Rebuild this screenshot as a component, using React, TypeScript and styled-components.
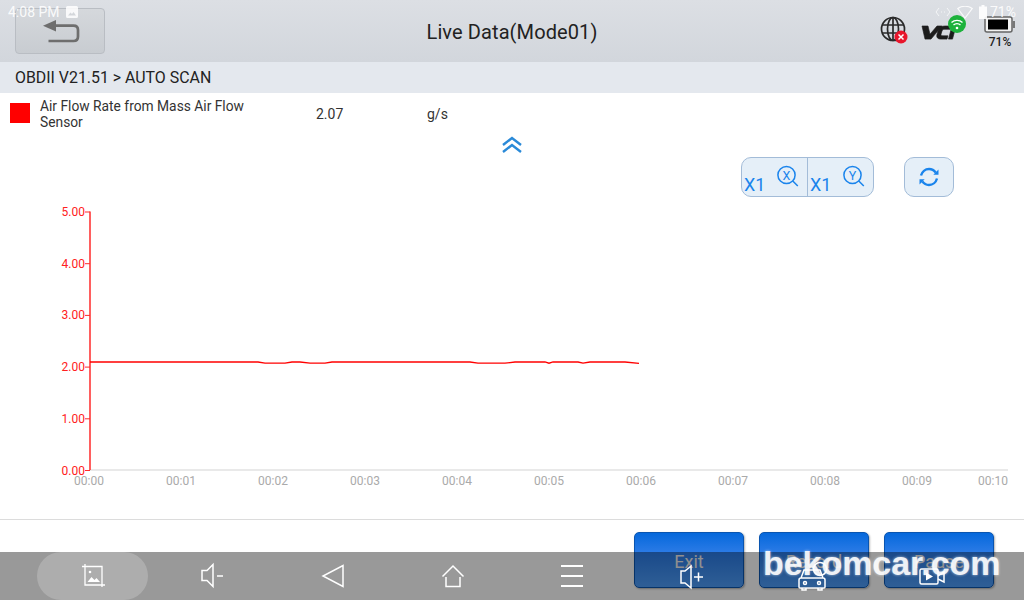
import React from "react";
import styled, { createGlobalStyle } from "styled-components";

const Global = createGlobalStyle`
  html, body { margin: 0; padding: 0; background: #fff; }
  body { font-family: Roboto, "Liberation Sans", sans-serif; }
`;

const Screen = styled.div`
  position: relative;
  width: 1024px;
  height: 600px;
  overflow: hidden;
  display: flex;
  flex-direction: column;
  background: #fff;
  color: #222;
`;

const Header = styled.header`
  height: 62px;
  flex: none;
  display: grid;
  grid-template-columns: 1fr auto 1fr;
  align-items: center;
  padding: 0 8px 0 15px;
  box-sizing: border-box;
  background: linear-gradient(#dcdfe4, #d2d6dc);
`;

const BackButton = styled.button`
  width: 90px;
  height: 46px;
  margin-top: -1px;
  padding: 0;
  display: flex;
  align-items: center;
  justify-content: center;
  border: 1px solid #b9bdc3;
  border-radius: 4px;
  background: linear-gradient(#d5d8dc, #c8ccd1);
`;

const Title = styled.h1`
  margin: 2px 0 0;
  transform: translateX(-3.5px);
  text-align: center;
  font-size: 20px;
  letter-spacing: 0.1px;
  font-weight: 400;
  color: #222;
`;

const StatusIcons = styled.div`
  justify-self: end;
  display: flex;
  align-items: flex-start;
  height: 62px;
`;

const GlobeIcon = styled.svg`
  margin-top: 16px;
`;

const VciLogo = styled.svg`
  margin: 10px 0 0 11px;
`;

const BatteryBox = styled.div`
  display: flex;
  flex-direction: column;
  align-items: center;
  gap: 2px;
  margin: 16px 0 0 17px;
  font-size: 12px;
  font-weight: 500;
  color: #222;
  line-height: 14px;
`;

const Breadcrumb = styled.div`
  height: 31px;
  flex: none;
  display: flex;
  align-items: center;
  padding-left: 15px;
  background: #e4e8ee;
  font-size: 15.9px;
  color: #222;
`;

const DataRow = styled.div`
  height: 40px;
  flex: none;
  display: flex;
  align-items: center;
  box-sizing: border-box;
  font-size: 13.8px;
  color: #333;
`;

const Swatch = styled.span`
  width: 20px;
  height: 20px;
  margin-left: 10px;
  background: #ff0000;
  flex: none;
`;

const SensorName = styled.span`
  width: 226px;
  margin: 1px 0 0 10px;
  line-height: 16px;
  flex: none;
`;

const Value = styled.span`
  width: 50px;
  margin: 2px 0 0 50px;
  font-size: 14px;
  flex: none;
`;

const Unit = styled.span`
  margin: 2px 0 0 61px;
  font-size: 14px;
`;

const Expand = styled.div`
  height: 24px;
  flex: none;
  display: flex;
  justify-content: center;
`;

const ControlRow = styled.div`
  height: 40px;
  flex: none;
  display: flex;
  justify-content: flex-end;
  padding-right: 70px;
  gap: 30px;
`;

const ZoomGroup = styled.div`
  width: 133px;
  height: 40px;
  box-sizing: border-box;
  display: flex;
  border: 1px solid #a3bcd8;
  border-radius: 10px;
  background: #e5eff8;
`;

const ZoomCell = styled.div<{ $divider?: boolean }>`
  flex: 1;
  position: relative;
  display: flex;
  justify-content: space-between;
  align-items: flex-start;
  padding: 7px 7px 0 2px;
  border-left: ${(p) => (p.$divider ? "1px solid #a3bcd8" : "none")};
`;

const ZoomLabel = styled.span`
  align-self: flex-end;
  font-size: 18px;
  line-height: 22px;
  color: #1a84ec;
`;

const RefreshButton = styled.button`
  width: 50px;
  height: 40px;
  padding: 0;
  display: flex;
  align-items: center;
  justify-content: center;
  border: 1px solid #a3bcd8;
  border-radius: 10px;
  background: #e5eff8;
`;

const ChartArea = styled.div`
  flex: 1;
  min-height: 0;
`;

const ChartSvg = styled.svg`
  display: block;
  font-family: Roboto, "Liberation Sans", sans-serif;
  font-size: 12px;
`;

const Footer = styled.footer`
  height: 81px;
  flex: none;
  box-sizing: border-box;
  border-top: 1px solid #dcdcdc;
  padding: 12px 30px 0 0;
  display: flex;
  justify-content: flex-end;
  gap: 15px;
`;

const ActionButton = styled.button`
  width: 110px;
  height: 56px;
  padding: 18px 0 0;
  box-sizing: border-box;
  display: flex;
  justify-content: center;
  align-items: flex-start;
  border: 1px solid #0a55b0;
  border-radius: 5px;
  background: linear-gradient(#0568dc, #2b7be6 36%, #4f9efa);
  box-shadow: 1px 1px 2px rgba(0, 0, 0, 0.3);
  color: #eeeeee;
  font-family: Roboto, "Liberation Sans", sans-serif;
  font-size: 18px;
`;

const SystemStatus = styled.div`
  position: absolute;
  top: 0;
  left: 0;
  right: 0;
  height: 24px;
  display: flex;
  align-items: center;
  justify-content: space-between;
  padding: 0 8px;
  box-sizing: border-box;
  color: rgba(255, 255, 255, 0.9);
  font-size: 14px;
  pointer-events: none;
`;

const StatusGroup = styled.div`
  display: flex;
  align-items: center;
  gap: 6px;
`;

const BatteryPercent = styled.span`
  margin-left: -3px;
`;

const NavBar = styled.nav`
  position: absolute;
  left: 0;
  right: 0;
  bottom: 0;
  height: 48px;
  background: rgba(0, 0, 0, 0.4);
`;

const NavHighlight = styled.div`
  position: absolute;
  left: 37px;
  top: 0;
  width: 111px;
  height: 48px;
  border-radius: 24px;
  background: rgba(255, 255, 255, 0.2);
`;

const NavIcon = styled.svg<{ $x: number }>`
  position: absolute;
  left: ${(p) => p.$x}px;
  top: 0;
`;

const Watermark = styled.div`
  position: absolute;
  left: 763px;
  top: 543px;
  font-family: "Liberation Sans", sans-serif;
  font-size: 34px;
  line-height: 40px;
  font-weight: 700;
  letter-spacing: -0.05px;
  color: #fff;
  opacity: 0.92;
  text-shadow: 0 0 3px rgba(255, 255, 255, 0.7);
  white-space: nowrap;
`;

const linePoints =
  "90,165 258,165 265,166.2 285,166.2 292,165 300,165 310,166.2 325,166.2 332,165 470,165 478,166.2 505,166.2 515,165 545,165 549,166.2 553,165 578,165 583,166.2 590,165 625,165 639,166.4";

const yTicks = ["5.00", "4.00", "3.00", "2.00", "1.00", "0.00"];
const xLabels = [
  ["00:00", 89],
  ["00:01", 181],
  ["00:02", 273],
  ["00:03", 365],
  ["00:04", 457],
  ["00:05", 549],
  ["00:06", 641],
  ["00:07", 733],
  ["00:08", 825],
  ["00:09", 917],
  ["00:10", 993],
] as const;

const ZoomGlass = ({ letter }: { letter: string }) => (
  <svg width="24" height="24" viewBox="0 0 24 24" fill="none" stroke="#1a84ec" strokeWidth="1.5">
    <circle cx="10.5" cy="10" r="8.6" />
    <path d="M16.800 16l5 5" />
    <text x="10.5" y="14.500" textAnchor="middle" fontSize="12.500" fill="#1a84ec" stroke="none" fontFamily="Roboto, sans-serif">
      {letter}
    </text>
  </svg>
);

export default function App() {
  return (
    <Screen>
      <Global />
      <Header>
        <BackButton aria-label="Back">
          <svg width="40" height="26" viewBox="0 0 40 26" fill="none">
            <path d="M3 7.700L16 2v11.500z" fill="#6e6e6e" />
            <path d="M15 7.700H33.500c3 0 4.500 1.800 4.500 4.300v6.500c0 3-1.800 4.500-4.500 4.500H8.500" stroke="#6e6e6e" strokeWidth="2.700" />
          </svg>
        </BackButton>
        <Title>Live Data(Mode01)</Title>
        <StatusIcons>
          <GlobeIcon width="30" height="30" viewBox="0 0 30 30" fill="none">
            <g stroke="#2a2a2a" strokeWidth="1.700">
              <circle cx="13" cy="13" r="11.500" />
              <ellipse cx="13" cy="13" rx="5.500" ry="11.500" />
              <path d="M2 9h22M2 17h22M13 1.500v23" />
            </g>
            <circle cx="21" cy="21" r="6.500" fill="#e8162c" />
            <path d="M18.500 18.500l5 5m0-5l-5 5" stroke="#fff" strokeWidth="1.500" />
          </GlobeIcon>
          <VciLogo width="46" height="40" viewBox="0 0 46 40">
            <g transform="translate(0,16) scale(1,.82) translate(0,-16)" fill="#1c1c1c" stroke="#1c1c1c" strokeWidth="0.7">
              <path d="M1 16h6l2 10 7-10h5l-11 16H4z" />
              <path d="M30 16h-6c-4 0-6 2-7 6l-1 4c-1 4 1 6 4 6h6l1-4h-5c-2 0-2-1-2-2l1-4c.5-2 1.500-2 3-2h5z" />
              <path d="M31 16h4l-3.500 16h-4z" />
            </g>
            <circle cx="36" cy="14" r="9" fill="#1db23c" />
            <g fill="none" stroke="#fff" strokeWidth="1.400">
              <path d="M30.500 12.500c3-2.800 8-2.800 11 0" />
              <path d="M32.500 15c2-1.800 5-1.800 7 0" />
            </g>
            <circle cx="36" cy="18" r="1.300" fill="#fff" />
          </VciLogo>
          <BatteryBox>
            <svg width="32" height="17" viewBox="0 0 32 17" fill="none">
              <rect x="1" y="1" width="27" height="15" rx="2" fill="#f2f2f2" stroke="#666" strokeWidth="1.500" />
              <rect x="4" y="3.500" width="20" height="10" fill="#000" />
              <rect x="28.500" y="5" width="2.500" height="7" fill="#777" />
            </svg>
            71%
          </BatteryBox>
        </StatusIcons>
      </Header>
      <Breadcrumb>OBDII V21.51 &gt; AUTO SCAN</Breadcrumb>
      <DataRow>
        <Swatch />
        <SensorName>Air Flow Rate from Mass Air Flow Sensor</SensorName>
        <Value>2.07</Value>
        <Unit>g/s</Unit>
      </DataRow>
      <Expand>
        <svg width="24" height="24" viewBox="0 0 24 24" fill="none" stroke="#2a8ad8" strokeWidth="2.400">
          <path d="M3 12l9-7 9 7M3 19l9-7 9 7" />
        </svg>
      </Expand>
      <ControlRow>
        <ZoomGroup>
          <ZoomCell>
            <ZoomLabel>X1</ZoomLabel>
            <ZoomGlass letter="X" />
          </ZoomCell>
          <ZoomCell $divider>
            <ZoomLabel>X1</ZoomLabel>
            <ZoomGlass letter="Y" />
          </ZoomCell>
        </ZoomGroup>
        <RefreshButton aria-label="Refresh">
          <svg width="22" height="22" viewBox="0 0 22 22" fill="none" stroke="#1a84ec" strokeWidth="2.400">
            <path d="M3 9.500C4 5.800 7.200 3 11 3c2.800 0 5.200 1.400 6.700 3.600" />
            <path d="M19 12.500C18 16.200 14.800 19 11 19c-2.800 0-5.200-1.400-6.700-3.600" />
            <path d="M20.500 3.500v5.200h-5.200z" fill="#1a84ec" stroke="none" />
            <path d="M1.500 18.500v-5.200h5.200z" fill="#1a84ec" stroke="none" />
          </svg>
        </RefreshButton>
      </ControlRow>
      <ChartArea>
        <ChartSvg width="1024" height="322" viewBox="0 0 1024 322">
          <line x1="90" y1="273" x2="1008" y2="273" stroke="#e2e2e2" strokeWidth="1.500" />
          <line x1="90" y1="14.500" x2="90" y2="273" stroke="#ff2a2a" strokeWidth="1.500" />
          {yTicks.map((t, i) => (
            <g key={t}>
              <line x1="85" y1={15 + i * 51.7} x2="90" y2={15 + i * 51.7} stroke="#ff2a2a" />
              <text x="85" y={19 + i * 51.7} textAnchor="end" fill="#ff2020">
                {t}
              </text>
            </g>
          ))}
          {xLabels.map(([t, x]) => (
            <text key={t} x={x} y="288" textAnchor="middle" fill="#aaaaaa">
              {t}
            </text>
          ))}
          <polyline points={linePoints} fill="none" stroke="#ff0000" strokeWidth="1.300" />
        </ChartSvg>
      </ChartArea>
      <Footer>
        <ActionButton>Exit</ActionButton>
        <ActionButton>Record</ActionButton>
        <ActionButton>Pause</ActionButton>
      </Footer>

      <SystemStatus>
        <StatusGroup>
          4:08 PM
          <svg width="12" height="12" viewBox="0 0 12 12">
            <path d="M0 1.500Q0 0 1.500 0h9Q12 0 12 1.500v9q0 1.500-1.500 1.500h-9Q0 12 0 10.500z M2 9.500h8L7.500 6 6 8 4.500 6.500z" fill="rgba(255,255,255,.85)" fillRule="evenodd" />
          </svg>
        </StatusGroup>
        <StatusGroup>
          <svg width="16" height="10" viewBox="0 0 16 10" fill="none" stroke="rgba(255,255,255,.7)">
            <path d="M4 1L1 5l3 4M12 1l3 4-3 4M6 5h1M9 5h1" />
          </svg>
          <svg width="16" height="13" viewBox="0 0 16 13" fill="none" stroke="rgba(255,255,255,.85)" strokeWidth="1.200">
            <path d="M.8 2.500C5 -.500 11 -.500 15.200 2.500L8 12z" />
          </svg>
          <svg width="8" height="14" viewBox="0 0 8 14">
            <path d="M2.500 0h3v1.500H8V14H0V1.500h2.500z" fill="rgba(255,255,255,.9)" />
          </svg>
          <BatteryPercent>71%</BatteryPercent>
        </StatusGroup>
      </SystemStatus>

      <NavBar>
        <NavHighlight />
        <NavIcon $x={80} width="26" height="48" viewBox="0 0 26 48" fill="none" stroke="#fff" strokeWidth="1.300">
          <path d="M2 14.500H22V35M5 12v21h20" />
          <path d="M7.500 30l4-5 3 3 2-2 3.500 4z" fill="#fff" stroke="none" />
          <circle cx="10" cy="20" r="1.300" fill="#fff" stroke="none" />
        </NavIcon>
        <NavIcon $x={198} width="28" height="48" viewBox="0 0 28 48" fill="none" stroke="#fff" strokeWidth="1.500">
          <path d="M4 18.500h5l6-6v22l-6-6H4z" />
          <path d="M19 24h6" />
        </NavIcon>
        <NavIcon $x={320} width="26" height="48" viewBox="0 0 26 48" fill="none" stroke="#fff" strokeWidth="1.500">
          <path d="M23 13.500v21L3 24z" />
        </NavIcon>
        <NavIcon $x={440} width="26" height="48" viewBox="0 0 26 48" fill="none" stroke="#fff" strokeWidth="1.500">
          <path d="M2.500 24.500L13 14l10.500 10.500M6 25v9.500h14V25" />
        </NavIcon>
        <NavIcon $x={559} width="26" height="48" viewBox="0 0 26 48" fill="none" stroke="#fff" strokeWidth="2">
          <path d="M2 14h22M2 24h22M2 34h22" />
        </NavIcon>
        <NavIcon $x={678} width="28" height="48" viewBox="0 0 28 48" fill="none" stroke="#fff" strokeWidth="1.500">
          <path d="M3 19h4l6-5v22l-6-5H3z" />
          <path d="M16 25h9M20.500 20.500v9" />
        </NavIcon>
        <NavIcon $x={795} width="34" height="48" viewBox="0 0 34 48" fill="none" stroke="#fff" strokeWidth="1.500">
          <path d="M6 26l3-8h16l3 8M4 28q0-2 2-2h22q2 0 2 2v7q0 1-1 1H5q-1 0-1-1zM7 36v2h4v-2M23 36v2h4v-2" />
          <circle cx="25" cy="17" r="6.500" />
          <circle cx="10" cy="31" r="1.500" />
          <circle cx="24" cy="31" r="1.500" />
        </NavIcon>
        <NavIcon $x={918} width="28" height="48" viewBox="0 0 28 48" fill="none" stroke="#fff" strokeWidth="1.500">
          <rect x="2" y="17" width="18" height="15" rx="1.500" />
          <path d="M20 24l6-4v10l-6-3" />
          <path d="M8 20.500l7 4-7 4z" fill="#fff" stroke="none" />
        </NavIcon>
      </NavBar>
      <Watermark>bekomcar.com</Watermark>
    </Screen>
  );
}
